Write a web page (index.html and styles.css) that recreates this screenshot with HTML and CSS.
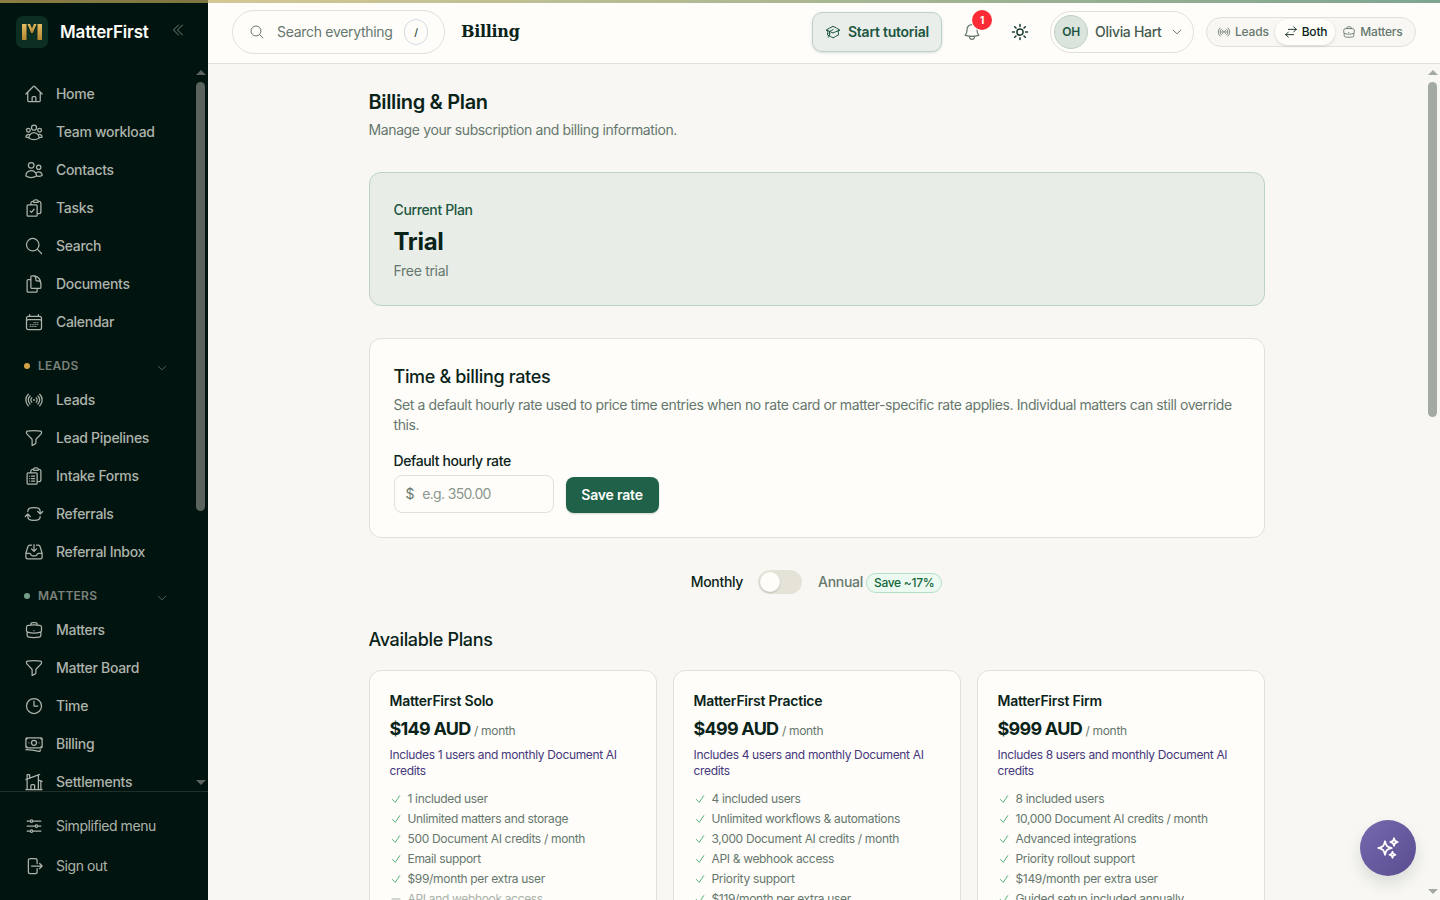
FILE: index.html
```html
<!DOCTYPE html>
<html lang="en">
<head>
    <meta charset="UTF-8">
    <meta name="viewport" content="width=device-width, initial-scale=1.0">
    <title>Billing - MatterFirst</title>
    <link rel="stylesheet" href="styles.css">
</head>
<body>
    <!-- Icon sprite -->
    <svg class="sprite">
        <symbol id="home" viewBox="0 0 24 24"><path d="m2.25 12 8.954-8.955c.44-.439 1.152-.439 1.591 0L21.75 12M4.5 9.75v10.125c0 .621.504 1.125 1.125 1.125H9.75v-4.875c0-.621.504-1.125 1.125-1.125h2.25c.621 0 1.125.504 1.125 1.125V21h4.125c.621 0 1.125-.504 1.125-1.125V9.75M8.25 21h8.25"/></symbol>
        <symbol id="team" viewBox="0 0 24 24"><path d="M18 18.72a9.094 9.094 0 0 0 3.741-.479 3 3 0 0 0-4.682-2.72m.94 3.198.001.031c0 .225-.012.447-.037.666A11.944 11.944 0 0 1 12 21c-2.17 0-4.207-.576-5.963-1.584A6.062 6.062 0 0 1 6 18.719m12 0a5.971 5.971 0 0 0-.941-3.197m0 0A5.995 5.995 0 0 0 12 12.75a5.995 5.995 0 0 0-5.058 2.772m0 0a3 3 0 0 0-4.681 2.72 8.986 8.986 0 0 0 3.74.477m.94-3.197a5.971 5.971 0 0 0-.94 3.197M15 6.75a3 3 0 1 1-6 0 3 3 0 0 1 6 0Zm6 3a2.25 2.25 0 1 1-4.5 0 2.25 2.25 0 0 1 4.5 0Zm-13.5 0a2.25 2.25 0 1 1-4.5 0 2.25 2.25 0 0 1 4.5 0Z"/></symbol>
        <symbol id="users" viewBox="0 0 24 24"><path d="M15 19.128a9.38 9.38 0 0 0 2.625.372 9.337 9.337 0 0 0 4.121-.952 4.125 4.125 0 0 0-7.533-2.493M15 19.128v-.003c0-1.113-.285-2.16-.786-3.07M15 19.128v.106A12.318 12.318 0 0 1 8.624 21c-2.331 0-4.512-.645-6.374-1.766l-.001-.109a6.375 6.375 0 0 1 11.964-3.07M12 6.375a3.375 3.375 0 1 1-6.75 0 3.375 3.375 0 0 1 6.75 0Zm8.25 2.25a2.625 2.625 0 1 1-5.25 0 2.625 2.625 0 0 1 5.25 0Z"/></symbol>
        <symbol id="tasks" viewBox="0 0 24 24"><path d="M11.35 3.836c-.065.21-.1.433-.1.664 0 .414.336.75.75.75h4.5a.75.75 0 0 0 .75-.75 2.25 2.25 0 0 0-.1-.664m-5.8 0A2.251 2.251 0 0 1 13.5 2.25H15c1.012 0 1.867.668 2.15 1.586m-5.8 0c-.376.023-.75.05-1.124.08C9.095 4.01 8.25 4.973 8.25 6.108V8.25m8.9-4.414c.376.023.75.05 1.124.08 1.131.094 1.976 1.057 1.976 2.192V16.5A2.25 2.25 0 0 1 18 18.75h-2.25m-7.5-10.5H4.875c-.621 0-1.125.504-1.125 1.125v11.25c0 .621.504 1.125 1.125 1.125h9.75c.621 0 1.125-.504 1.125-1.125V18.75m-7.5-10.5h6.375c.621 0 1.125.504 1.125 1.125v9.375m-8.25-3 1.5 1.5 3-3.75"/></symbol>
        <symbol id="search" viewBox="0 0 24 24"><path d="m21 21-5.197-5.197m0 0A7.5 7.5 0 1 0 5.196 5.196a7.5 7.5 0 0 0 10.607 10.607Z"/></symbol>
        <symbol id="documents" viewBox="0 0 24 24"><path d="M15.75 17.25v3.375c0 .621-.504 1.125-1.125 1.125h-9.75a1.125 1.125 0 0 1-1.125-1.125V7.875c0-.621.504-1.125 1.125-1.125H6.75a9.06 9.06 0 0 1 1.5.124m7.5 10.376h3.375c.621 0 1.125-.504 1.125-1.125V11.25c0-4.46-3.243-8.161-7.5-8.876a9.06 9.06 0 0 0-1.5-.124H9.375c-.621 0-1.125.504-1.125 1.125v3.5m7.5 10.375H9.375a1.125 1.125 0 0 1-1.125-1.125v-9.25m12 6.625v-1.875a3.375 3.375 0 0 0-3.375-3.375h-1.5a1.125 1.125 0 0 1-1.125-1.125v-1.5a3.375 3.375 0 0 0-3.375-3.375H9.75"/></symbol>
        <symbol id="calendar" viewBox="0 0 24 24"><path d="M6.75 3v2.25M17.25 3v2.25M3 18.75V7.5a2.25 2.25 0 0 1 2.25-2.25h13.5A2.25 2.25 0 0 1 21 7.5v11.25m-18 0A2.25 2.25 0 0 0 5.25 21h13.5A2.25 2.25 0 0 0 21 18.75m-18 0v-7.5A2.25 2.25 0 0 1 5.25 9h13.5A2.25 2.25 0 0 1 21 11.25v7.5M12 12.75h.01m2.24 0h.01m2.24 0h.01M7.5 15h.01m2.24 0h.01M12 15h.01m2.24 0h.01m2.24 0h.01M7.5 17.25h.01m2.24 0h.01m2.24 0h.01m2.24 0h.01"/></symbol>
        <symbol id="signal" viewBox="0 0 24 24"><path d="M9.348 14.652a3.75 3.75 0 0 1 0-5.304m5.304 0a3.75 3.75 0 0 1 0 5.304m-7.425 2.121a6.75 6.75 0 0 1 0-9.546m9.546 0a6.75 6.75 0 0 1 0 9.546M5.106 18.894c-3.808-3.807-3.808-9.98 0-13.788m13.788 0c3.808 3.807 3.808 9.98 0 13.788M12 12h.008v.008H12V12Zm.375 0a.375.375 0 1 1-.75 0 .375.375 0 0 1 .75 0Z"/></symbol>
        <symbol id="funnel" viewBox="0 0 24 24"><path d="M12 3c2.755 0 5.455.232 8.083.678.533.09.917.556.917 1.096v1.044a2.25 2.25 0 0 1-.659 1.591l-5.432 5.432a2.25 2.25 0 0 0-.659 1.591v2.927a2.25 2.25 0 0 1-1.244 2.013L9.75 21v-6.568a2.25 2.25 0 0 0-.659-1.591L3.659 7.409A2.25 2.25 0 0 1 3 5.818V4.774c0-.54.384-1.006.917-1.096A48.32 48.32 0 0 1 12 3Z"/></symbol>
        <symbol id="forms" viewBox="0 0 24 24"><path d="M9 12h3.75M9 15h3.75M9 18h3.75m3 .75H18a2.25 2.25 0 0 0 2.25-2.25V6.108c0-1.135-.845-2.098-1.976-2.192a48.424 48.424 0 0 0-1.123-.08m-5.801 0c-.065.21-.1.433-.1.664 0 .414.336.75.75.75h4.5a.75.75 0 0 0 .75-.75 2.25 2.25 0 0 0-.1-.664m-5.8 0A2.251 2.251 0 0 1 13.5 2.25H15c1.012 0 1.867.668 2.15 1.586m-5.8 0c-.376.023-.75.05-1.124.08C9.095 4.01 8.25 4.973 8.25 6.108V8.25m0 0H4.875c-.621 0-1.125.504-1.125 1.125v11.25c0 .621.504 1.125 1.125 1.125h9.75c.621 0 1.125-.504 1.125-1.125V9.375c0-.621-.504-1.125-1.125-1.125H8.25ZM6.75 12h.008v.008H6.75V12Zm0 3h.008v.008H6.75V15Zm0 3h.008v.008H6.75V18Z"/></symbol>
        <symbol id="referrals" viewBox="0 0 24 24"><path d="M19.5 12c0-1.232-.046-2.453-.138-3.662a4.006 4.006 0 0 0-3.7-3.7 48.678 48.678 0 0 0-7.324 0 4.006 4.006 0 0 0-3.7 3.7c-.017.22-.032.441-.046.662M19.5 12l3-3m-3 3-3-3m-12 3c0 1.232.046 2.453.138 3.662a4.006 4.006 0 0 0 3.7 3.7 48.656 48.656 0 0 0 7.324 0 4.006 4.006 0 0 0 3.7-3.7c.017-.22.032-.441.046-.662M4.5 12l3 3m-3-3-3 3"/></symbol>
        <symbol id="inbox" viewBox="0 0 24 24"><path d="M9 3.75H6.912a2.25 2.25 0 0 0-2.15 1.588L2.35 13.177a2.25 2.25 0 0 0-.1.661V18a2.25 2.25 0 0 0 2.25 2.25h15A2.25 2.25 0 0 0 21.75 18v-4.162c0-.224-.034-.447-.1-.661L19.24 5.338a2.25 2.25 0 0 0-2.15-1.588H15M2.25 13.5h3.86a2.25 2.25 0 0 1 2.012 1.244l.256.512a2.25 2.25 0 0 0 2.013 1.244h3.218a2.25 2.25 0 0 0 2.013-1.244l.256-.512a2.25 2.25 0 0 1 2.013-1.244h3.859M12 3v8.25m0 0-3-3m3 3 3-3"/></symbol>
        <symbol id="briefcase" viewBox="0 0 24 24"><path d="M20.25 14.15v4.25c0 1.094-.787 2.036-1.872 2.18-2.087.277-4.216.42-6.378.42s-4.291-.143-6.378-.42c-1.085-.144-1.872-1.086-1.872-2.18v-4.25m16.5 0a2.18 2.18 0 0 0 .75-1.661V8.706c0-1.081-.768-2.015-1.837-2.175a48.114 48.114 0 0 0-3.413-.387m4.5 8.006c-.194.165-.42.295-.673.38A23.978 23.978 0 0 1 12 15.75c-2.648 0-5.195-.429-7.577-1.22a2.016 2.016 0 0 1-.673-.38m0 0A2.18 2.18 0 0 1 3 12.489V8.706c0-1.081.768-2.015 1.837-2.175a48.111 48.111 0 0 1 3.413-.387m7.5 0V5.25A2.25 2.25 0 0 0 13.5 3h-3a2.25 2.25 0 0 0-2.25 2.25v.894m7.5 0a48.667 48.667 0 0 0-7.5 0M12 12.75h.008v.008H12v-.008Z"/></symbol>
        <symbol id="clock" viewBox="0 0 24 24"><path d="M12 6v6h4.5m4.5 0a9 9 0 1 1-18 0 9 9 0 0 1 18 0Z"/></symbol>
        <symbol id="banknotes" viewBox="0 0 24 24"><path d="M2.25 18.75a60.07 60.07 0 0 1 15.797 2.101c.727.198 1.453-.342 1.453-1.096V18.75M3.75 4.5v.75A.75.75 0 0 1 3 6h-.75m0 0v-.375c0-.621.504-1.125 1.125-1.125H20.25M2.25 6v9m18-10.5v.75c0 .414.336.75.75.75h.75m-1.5-1.5h.375c.621 0 1.125.504 1.125 1.125v9.75c0 .621-.504 1.125-1.125 1.125h-.375m1.5-1.5H21a.75.75 0 0 0-.75.75v.75m0 0H3.75m0 0h-.375a1.125 1.125 0 0 1-1.125-1.125V15m1.5 1.5v-.75A.75.75 0 0 0 3 15h-.75M15 10.5a3 3 0 1 1-6 0 3 3 0 0 1 6 0Zm3 0h.008v.008H18V10.5Zm-12 0h.008v.008H6V10.5Z"/></symbol>
        <symbol id="property" viewBox="0 0 24 24"><path d="M8.25 21v-4.875c0-.621.504-1.125 1.125-1.125h2.25c.621 0 1.125.504 1.125 1.125V21m0 0h4.5V3.545M12.75 21h7.5V10.75M2.25 21h1.5m18 0h-18M2.25 9l4.5-1.636M18.75 3l-1.5.545m0 6.205 3 1m1.5.5-1.5-.5M6.75 7.364V3h-3v18m3-13.636 10.5-3.819"/></symbol>
        <symbol id="sliders" viewBox="0 0 24 24"><path d="M10.5 6h9.75M10.5 6a1.5 1.5 0 1 1-3 0m3 0a1.5 1.5 0 1 0-3 0M3.75 6H7.5m3 12h9.75m-9.75 0a1.5 1.5 0 0 1-3 0m3 0a1.5 1.5 0 0 0-3 0m-3.75 0H7.5m9-6h3.75m-3.75 0a1.5 1.5 0 0 1-3 0m3 0a1.5 1.5 0 0 0-3 0m-9.75 0h9.75"/></symbol>
        <symbol id="logout" viewBox="0 0 24 24"><path d="M15.75 9V5.25A2.25 2.25 0 0 0 13.5 3h-6a2.25 2.25 0 0 0-2.25 2.25v13.5A2.25 2.25 0 0 0 7.5 21h6a2.25 2.25 0 0 0 2.25-2.25V15m3 0 3-3m0 0-3-3m3 3H9"/></symbol>
        <symbol id="cap" viewBox="0 0 24 24"><path d="M4.26 10.147a60.438 60.438 0 0 0-.491 6.347A48.62 48.62 0 0 1 12 20.904a48.62 48.62 0 0 1 8.232-4.41 60.46 60.46 0 0 0-.491-6.347m-15.482 0a50.636 50.636 0 0 0-2.658-.813A59.906 59.906 0 0 1 12 3.493a59.903 59.903 0 0 1 10.399 5.84c-.896.248-1.783.52-2.658.814m-15.482 0A50.717 50.717 0 0 1 12 13.489a50.702 50.702 0 0 1 7.74-3.342M6.75 15a.75.75 0 1 0 0-1.5.75.75 0 0 0 0 1.5Zm0 0v-3.675A55.378 55.378 0 0 1 12 8.443m-7.007 11.55A5.981 5.981 0 0 0 6.75 15.75v-1.5"/></symbol>
        <symbol id="bell" viewBox="0 0 24 24"><path d="M14.857 17.082a23.848 23.848 0 0 0 5.454-1.31A8.967 8.967 0 0 1 18 9.75V9A6 6 0 0 0 6 9v.75a8.967 8.967 0 0 1-2.312 6.022c1.733.64 3.56 1.085 5.455 1.31m5.714 0a24.255 24.255 0 0 1-5.714 0m5.714 0a3 3 0 1 1-5.714 0"/></symbol>
        <symbol id="sun" viewBox="0 0 24 24"><path d="M12 3v2.25m6.364.386-1.591 1.591M21 12h-2.25m-.386 6.364-1.591-1.591M12 18.75V21m-4.773-4.227-1.591 1.591M5.25 12H3m4.227-4.773L5.636 5.636M15.75 12a3.75 3.75 0 1 1-7.5 0 3.75 3.75 0 0 1 7.5 0Z"/></symbol>
        <symbol id="chevron" viewBox="0 0 24 24"><path d="m19.5 8.25-7.5 7.5-7.5-7.5"/></symbol>
        <symbol id="collapse" viewBox="0 0 24 24"><path d="m18.75 4.5-7.5 7.5 7.5 7.5m-6-15L5.25 12l7.5 7.5"/></symbol>
        <symbol id="swap" viewBox="0 0 24 24"><path d="M7.5 21 3 16.5m0 0L7.5 12M3 16.5h13.5m0-13.5L21 7.5m0 0L16.5 12M21 7.5H7.5"/></symbol>
        <symbol id="check" viewBox="0 0 24 24"><path d="m4.5 12.75 6 6 9-13.5"/></symbol>
        <symbol id="minus" viewBox="0 0 24 24"><path d="M4 12h16"/></symbol>
        <symbol id="sparkles" viewBox="0 0 24 24"><path d="M9.813 15.904 9 18.75l-.813-2.846a4.5 4.5 0 0 0-3.09-3.09L2.25 12l2.846-.813a4.5 4.5 0 0 0 3.09-3.09L9 5.25l.813 2.846a4.5 4.5 0 0 0 3.09 3.09L15.75 12l-2.846.813a4.5 4.5 0 0 0-3.09 3.09ZM18.259 8.715 18 9.75l-.259-1.035a3.375 3.375 0 0 0-2.455-2.456L14.25 6l1.036-.259a3.375 3.375 0 0 0 2.455-2.456L18 2.25l.259 1.035a3.375 3.375 0 0 0 2.456 2.456L21.75 6l-1.035.259a3.375 3.375 0 0 0-2.456 2.456ZM16.894 20.567 16.5 21.75l-.394-1.183a2.25 2.25 0 0 0-1.423-1.423L13.5 18.75l1.183-.394a2.25 2.25 0 0 0 1.423-1.423l.394-1.183.394 1.183a2.25 2.25 0 0 0 1.423 1.423l1.183.394-1.183.394a2.25 2.25 0 0 0-1.423 1.423Z"/></symbol>
    </svg>

    <div class="top-line"></div>

    <div class="app">
        <aside class="sidebar">
            <div class="brand">
                <svg class="logo" viewBox="0 0 32 32">
                    <defs>
                        <linearGradient id="gold" x1="0" y1="0" x2="0" y2="1">
                            <stop offset="0" stop-color="#e6bd62"/>
                            <stop offset="1" stop-color="#b3862f"/>
                        </linearGradient>
                    </defs>
                    <rect width="32" height="32" rx="7" fill="#0d2e23"/>
                    <g fill="url(#gold)">
                        <rect x="6" y="8" width="4.5" height="16"/>
                        <rect x="21.500" y="8" width="4.500" height="16"/>
                        <polygon points="11.500,8 14,8 16,12.500 18,8 20.500,8 16.800,17 15.200,17"/>
                    </g>
                </svg>
                <span class="brand-name">MatterFirst</span>
                <svg class="icon collapse"><use href="#collapse"/></svg>
            </div>

            <div class="nav-area">
                <nav class="nav">
                    <a class="nav-item"><svg class="icon"><use href="#home"/></svg>Home</a>
                    <a class="nav-item"><svg class="icon"><use href="#team"/></svg>Team workload</a>
                    <a class="nav-item"><svg class="icon"><use href="#users"/></svg>Contacts</a>
                    <a class="nav-item"><svg class="icon"><use href="#tasks"/></svg>Tasks</a>
                    <a class="nav-item"><svg class="icon"><use href="#search"/></svg>Search</a>
                    <a class="nav-item"><svg class="icon"><use href="#documents"/></svg>Documents</a>
                    <a class="nav-item"><svg class="icon"><use href="#calendar"/></svg>Calendar</a>

                    <div class="nav-heading"><span class="dot gold"></span>LEADS<svg class="icon"><use href="#chevron"/></svg></div>
                    <a class="nav-item"><svg class="icon"><use href="#signal"/></svg>Leads</a>
                    <a class="nav-item"><svg class="icon"><use href="#funnel"/></svg>Lead Pipelines</a>
                    <a class="nav-item"><svg class="icon"><use href="#forms"/></svg>Intake Forms</a>
                    <a class="nav-item"><svg class="icon"><use href="#referrals"/></svg>Referrals</a>
                    <a class="nav-item"><svg class="icon"><use href="#inbox"/></svg>Referral Inbox</a>

                    <div class="nav-heading"><span class="dot green"></span>MATTERS<svg class="icon"><use href="#chevron"/></svg></div>
                    <a class="nav-item"><svg class="icon"><use href="#briefcase"/></svg>Matters</a>
                    <a class="nav-item"><svg class="icon"><use href="#funnel"/></svg>Matter Board</a>
                    <a class="nav-item"><svg class="icon"><use href="#clock"/></svg>Time</a>
                    <a class="nav-item"><svg class="icon"><use href="#banknotes"/></svg>Billing</a>
                    <a class="nav-item"><svg class="icon"><use href="#property"/></svg>Settlements</a>
                </nav>
                <div class="scrollbar dark">
                    <span class="arrow up"></span>
                    <span class="thumb"></span>
                    <span class="arrow down"></span>
                </div>
            </div>

            <div class="sidebar-footer">
                <a class="nav-item"><svg class="icon"><use href="#sliders"/></svg>Simplified menu</a>
                <a class="nav-item"><svg class="icon"><use href="#logout"/></svg>Sign out</a>
            </div>
        </aside>

        <div class="page">
            <header class="header">
                <div class="search-box">
                    <svg class="icon"><use href="#search"/></svg>
                    <span>Search everything</span>
                    <kbd>/</kbd>
                </div>
                <span class="header-title">Billing</span>

                <button class="tutorial-btn"><svg class="icon"><use href="#cap"/></svg>Start tutorial</button>
                <div class="bell">
                    <svg class="icon"><use href="#bell"/></svg>
                    <span class="bell-count">1</span>
                </div>
                <svg class="icon sun"><use href="#sun"/></svg>
                <div class="user-menu">
                    <span class="avatar">OH</span>
                    <span class="user-name">Olivia Hart</span>
                    <svg class="icon"><use href="#chevron"/></svg>
                </div>
                <div class="view-switch">
                    <span class="view"><svg class="icon"><use href="#signal"/></svg>Leads</span>
                    <span class="view active"><svg class="icon"><use href="#swap"/></svg>Both</span>
                    <span class="view"><svg class="icon"><use href="#briefcase"/></svg>Matters</span>
                </div>
            </header>

            <div class="content-area">
                <main class="content">
                    <h1>Billing &amp; Plan</h1>
                    <p class="subtitle">Manage your subscription and billing information.</p>

                    <section class="card current-plan">
                        <p class="plan-label">Current Plan</p>
                        <p class="plan-title">Trial</p>
                        <p class="plan-note">Free trial</p>
                    </section>

                    <section class="card rates">
                        <h2>Time &amp; billing rates</h2>
                        <p class="rates-text">Set a default hourly rate used to price time entries when no rate card or matter-specific rate applies. Individual matters can still override this.</p>
                        <label class="rate-label" for="rate">Default hourly rate</label>
                        <div class="rate-row">
                            <div class="rate-input">
                                <span>$</span>
                                <input id="rate" type="text" placeholder="e.g. 350.00">
                            </div>
                            <button class="save-btn">Save rate</button>
                        </div>
                    </section>

                    <div class="period">
                        <span class="monthly">Monthly</span>
                        <span class="toggle"></span>
                        <span class="annual">Annual</span>
                        <span class="save-badge">Save ~17%</span>
                    </div>

                    <h2 class="plans-title">Available Plans</h2>
                    <div class="plans">
                        <div class="card plan">
                            <h3>MatterFirst Solo</h3>
                            <p class="price">$149 AUD <small>/ month</small></p>
                            <p class="includes">Includes 1 users and monthly Document AI credits</p>
                            <ul>
                                <li><svg class="icon"><use href="#check"/></svg>1 included user</li>
                                <li><svg class="icon"><use href="#check"/></svg>Unlimited matters and storage</li>
                                <li><svg class="icon"><use href="#check"/></svg>500 Document AI credits / month</li>
                                <li><svg class="icon"><use href="#check"/></svg>Email support</li>
                                <li><svg class="icon"><use href="#check"/></svg>$99/month per extra user</li>
                                <li class="off"><svg class="icon"><use href="#minus"/></svg>API and webhook access</li>
                            </ul>
                        </div>
                        <div class="card plan">
                            <h3>MatterFirst Practice</h3>
                            <p class="price">$499 AUD <small>/ month</small></p>
                            <p class="includes">Includes 4 users and monthly Document AI credits</p>
                            <ul>
                                <li><svg class="icon"><use href="#check"/></svg>4 included users</li>
                                <li><svg class="icon"><use href="#check"/></svg>Unlimited workflows &amp; automations</li>
                                <li><svg class="icon"><use href="#check"/></svg>3,000 Document AI credits / month</li>
                                <li><svg class="icon"><use href="#check"/></svg>API &amp; webhook access</li>
                                <li><svg class="icon"><use href="#check"/></svg>Priority support</li>
                                <li><svg class="icon"><use href="#check"/></svg>$119/month per extra user</li>
                            </ul>
                        </div>
                        <div class="card plan">
                            <h3>MatterFirst Firm</h3>
                            <p class="price">$999 AUD <small>/ month</small></p>
                            <p class="includes">Includes 8 users and monthly Document AI credits</p>
                            <ul>
                                <li><svg class="icon"><use href="#check"/></svg>8 included users</li>
                                <li><svg class="icon"><use href="#check"/></svg>10,000 Document AI credits / month</li>
                                <li><svg class="icon"><use href="#check"/></svg>Advanced integrations</li>
                                <li><svg class="icon"><use href="#check"/></svg>Priority rollout support</li>
                                <li><svg class="icon"><use href="#check"/></svg>$149/month per extra user</li>
                                <li><svg class="icon"><use href="#check"/></svg>Guided setup included annually</li>
                            </ul>
                        </div>
                    </div>
                </main>
                <div class="scrollbar">
                    <span class="arrow up"></span>
                    <span class="thumb"></span>
                    <span class="arrow down"></span>
                </div>
            </div>
        </div>
    </div>

    <button class="assistant-btn"><svg class="icon"><use href="#sparkles"/></svg></button>
</body>
</html>
```
FILE: styles.css
```css
* {
    box-sizing: border-box;
    margin: 0;
    padding: 0;
}

body {
    height: 100vh;
    overflow: hidden;
    font-family: Inter, "Liberation Sans", sans-serif;
    font-size: 14px;
    line-height: 20px;
    letter-spacing: -0.3px;
    color: #0a2319;
    background-color: #f8f7f3;
}

button, input {
    font: inherit;
    letter-spacing: inherit;
}

.sprite {
    display: none;
}

.icon {
    flex-shrink: 0;
    width: 20px;
    height: 20px;
    fill: none;
    stroke: currentColor;
    stroke-width: 1.5;
    stroke-linecap: round;
    stroke-linejoin: round;
}

/* Coloured line over the whole window */
.top-line {
    position: absolute;
    top: 0;
    left: 0;
    right: 0;
    height: 3px;
    background: linear-gradient(90deg, rgba(212, 180, 95, 0.65), rgba(58, 118, 89, 0.65));
    z-index: 5;
}

.app {
    display: flex;
    height: 100vh;
}

/* Sidebar */
.sidebar {
    display: flex;
    flex-direction: column;
    width: 208px;
    flex-shrink: 0;
    background-color: #02140f;
    color: #adb3ab;
}

.brand {
    display: flex;
    align-items: center;
    height: 64px;
    flex-shrink: 0;
    padding: 0 22px 0 16px;
}

.logo {
    width: 32px;
    height: 32px;
}

.brand-name {
    margin-left: 12px;
    font-size: 17px;
    font-weight: 600;
    letter-spacing: -0.15px;
    color: #fefdf9;
}

.collapse {
    width: 16px;
    height: 16px;
    margin-left: auto;
    margin-bottom: 4px;
    color: #78827b;
}

.nav-area {
    display: flex;
    flex: 1;
    min-height: 0;
}

.nav {
    flex: 1;
    padding: 11px 0 0 24px;
    overflow: hidden;
}

.nav-item {
    display: flex;
    align-items: center;
    gap: 12px;
    height: 38px;
    font-weight: 500;
    letter-spacing: -0.3px;
    white-space: nowrap;
}

.nav-heading {
    display: flex;
    align-items: center;
    height: 20px;
    margin: 15px 0 5px;
    padding-right: 25px;
    font-size: 12px;
    font-weight: 600;
    letter-spacing: 0.25px;
    color: #7b827b;
}

.nav-heading .icon {
    width: 12px;
    height: 12px;
    margin: 4px 0 0 auto;
    stroke-width: 2;
    color: #566059;
}

.dot {
    width: 6px;
    height: 6px;
    margin-right: 8px;
    border-radius: 50%;
}

.dot.gold {
    background-color: #d4a244;
}

.dot.green {
    background-color: #73a08b;
}

.sidebar-footer {
    height: 109px;
    flex-shrink: 0;
    padding: 14px 0 0 24px;
    border-top: 1px solid #1f2f29;
}

.sidebar-footer .nav-item {
    height: 40px;
    font-weight: 400;
    letter-spacing: -0.42px;
}

/* Scrollbars */
.scrollbar {
    display: flex;
    flex-direction: column;
    align-items: center;
    width: 15px;
    flex-shrink: 0;
    padding: 6px 0;
    color: #a3aaa3;
}

.scrollbar.dark {
    color: #5a635d;
}

.thumb {
    width: 9px;
    height: 335px;
    margin-top: 7px;
    border-radius: 5px;
    background-color: currentColor;
}

.dark .thumb {
    height: 429px;
}

.arrow {
    border: 5px solid transparent;
}

.arrow.up {
    border-top: 0;
    border-bottom-color: currentColor;
}

.arrow.down {
    margin-top: auto;
    border-bottom: 0;
    border-top-color: currentColor;
}

/* Header */
.page {
    display: flex;
    flex-direction: column;
    flex: 1;
    min-width: 0;
}

.header {
    display: flex;
    align-items: center;
    height: 64px;
    flex-shrink: 0;
    padding: 0 24px;
    background-color: #fefdf9;
    border-bottom: 1px solid #e2e1d7;
}

.search-box {
    display: flex;
    align-items: center;
    width: 213px;
    height: 44px;
    padding: 0 16px;
    border: 1px solid #e2e1d7;
    border-radius: 22px;
    color: #66776e;
}

.search-box .icon {
    width: 16px;
    height: 16px;
    margin-right: 12px;
}

kbd {
    width: 24px;
    height: 26px;
    margin-left: auto;
    border: 1px solid #d3d8e4;
    border-radius: 12px;
    font-family: inherit;
    font-size: 10px;
    font-weight: 600;
    line-height: 25px;
    text-align: center;
    color: #3d5147;
}

.header-title {
    margin-left: 16px;
    font-family: "DejaVu Serif", serif;
    font-size: 16px;
    font-weight: bold;
    letter-spacing: -0.3px;
}

.tutorial-btn {
    display: flex;
    align-items: center;
    gap: 7px;
    width: 130px;
    height: 40px;
    margin-left: auto;
    padding-left: 12px;
    border: 1px solid #bdd2c6;
    border-radius: 10px;
    background-color: #e9eeea;
    box-shadow: 0 1px 3px rgba(10, 35, 25, 0.15);
    color: #1c5640;
    font-weight: 600;
    letter-spacing: -0.25px;
    white-space: nowrap;
}

.tutorial-btn .icon {
    width: 16px;
    height: 16px;
}

.bell {
    position: relative;
    height: 20px;
    margin-left: 20px;
    color: #66776e;
}

/* Unread count over the bell */
.bell-count {
    position: absolute;
    top: -12px;
    left: 10px;
    width: 20px;
    height: 20px;
    border-radius: 50%;
    background-color: #fb2c36;
    box-shadow: 0 0 0 1px #fefdf9;
    color: #fff;
    font-size: 10px;
    font-weight: 700;
    text-align: center;
}

.sun {
    margin-left: 28px;
    stroke-width: 1.8;
    color: #12392b;
}

.user-menu {
    display: flex;
    align-items: center;
    width: 144px;
    height: 42px;
    margin-left: 20px;
    padding: 0 10px 0 3px;
    border: 1px solid #e2e1d7;
    border-radius: 21px;
    white-space: nowrap;
}

.avatar {
    width: 34px;
    height: 34px;
    border: 1px solid #bdd2c6;
    border-radius: 50%;
    background-color: #dae3dc;
    color: #1c5640;
    font-size: 12px;
    font-weight: 600;
    line-height: 32px;
    text-align: center;
}

.user-name {
    margin-left: 7px;
    font-weight: 500;
    color: #465a50;
}

.user-menu .icon {
    width: 12px;
    height: 12px;
    margin-left: auto;
    stroke-width: 2;
    color: #66776e;
}

.view-switch {
    display: flex;
    width: 210px;
    height: 30px;
    margin-left: 12px;
    padding: 1px;
    border: 1px solid #e2e1d7;
    border-radius: 15px;
    background-color: #f8f7f3;
    font-size: 12px;
    font-weight: 500;
    letter-spacing: -0.2px;
    color: #66776e;
}

.view {
    display: flex;
    align-items: center;
    gap: 4px;
    padding: 0 6px 0 9px;
}

.view .icon {
    width: 14px;
    height: 14px;
}

.view.active {
    padding: 0 8px 0 9px;
    border-radius: 13px;
    background-color: #fefdf9;
    box-shadow: 0 1px 3px rgba(10, 35, 25, 0.15);
    color: #0a2319;
}

.view.active + .view {
    padding-left: 7px;
}

/* Content */
.content-area {
    display: flex;
    flex: 1;
    min-height: 0;
}

.content {
    width: 896px;
    margin: 0 auto;
    padding-top: 24px;
    overflow: hidden;
}

h1 {
    font-size: 20px;
    font-weight: 600;
    line-height: 28px;
    letter-spacing: -0.35px;
}

h2 {
    font-size: 18px;
    font-weight: 500;
    line-height: 28px;
    letter-spacing: -0.34px;
}

.subtitle {
    margin-top: 4px;
    letter-spacing: -0.38px;
    color: #66776e;
}

.card {
    border: 1px solid #e2e1d7;
    border-radius: 12px;
    background-color: #fefdf9;
}

.current-plan {
    height: 134px;
    margin-top: 32px;
    padding: 27px 24px;
    border-color: #bdd2c6;
    background-color: #e8ede8;
}

.plan-label {
    font-weight: 500;
    letter-spacing: -0.36px;
    color: #1c5640;
}

.plan-title {
    margin: 6px 0 3px;
    font-size: 24px;
    font-weight: 700;
    line-height: 32px;
    letter-spacing: -0.3px;
}

.plan-note {
    color: #66776e;
}

.rates {
    height: 200px;
    margin-top: 32px;
    padding: 24px;
}

.rates-text {
    margin-top: 4px;
    letter-spacing: -0.41px;
    color: #66776e;
}

.rate-label {
    display: block;
    margin-top: 16px;
    font-weight: 500;
    letter-spacing: -0.38px;
}

.rate-row {
    display: flex;
    align-items: flex-end;
    gap: 12px;
    margin-top: 4px;
}

.rate-input {
    display: flex;
    align-items: center;
    width: 160px;
    height: 38px;
    padding: 0 11px;
    border: 1px solid #e2e1d7;
    border-radius: 8px;
    color: #66776e;
}

.rate-input input {
    width: 110px;
    margin-left: 8px;
    border: none;
    outline: none;
    background: transparent;
    letter-spacing: -0.65px;
}

.rate-input input::placeholder {
    color: #8b978f;
}

.save-btn {
    width: 93px;
    height: 36px;
    border: none;
    border-radius: 8px;
    background-color: #1f6249;
    box-shadow: 0 1px 2px rgba(10, 35, 25, 0.2);
    color: #fefdf9;
    font-weight: 600;
    letter-spacing: -0.2px;
}

.period {
    display: flex;
    align-items: center;
    justify-content: center;
    height: 24px;
    margin-top: 32px;
    font-weight: 500;
}

.toggle {
    width: 44px;
    height: 24px;
    margin: 0 16px 0 15px;
    padding: 2px;
    border-radius: 12px;
    background-color: #e5e3d8;
}

.toggle::before {
    content: "";
    display: block;
    width: 20px;
    height: 20px;
    border-radius: 50%;
    background-color: #fefdf9;
    box-shadow: 0 1px 2px rgba(10, 35, 25, 0.2);
}

.annual {
    color: #66776e;
}

.save-badge {
    height: 20px;
    margin: 2px 0 0 3px;
    padding: 0 7px;
    border: 1px solid #b4dfc5;
    border-radius: 10px;
    background-color: #ecfaf1;
    color: #13663a;
    font-size: 12px;
    line-height: 18px;
}

.plans-title {
    margin: 32px 0 16px;
}

.plans {
    display: grid;
    grid-template-columns: repeat(3, 1fr);
    gap: 16px;
}

.plan {
    padding: 20px;
}

.plan h3 {
    font-size: 14px;
    font-weight: 600;
    line-height: 20px;
    letter-spacing: -0.24px;
}

.price {
    margin-top: 4px;
    font-size: 18px;
    font-weight: 700;
    line-height: 28px;
    letter-spacing: -0.75px;
}

.price small {
    font-size: 12px;
    font-weight: 400;
    letter-spacing: -0.3px;
    color: #66776e;
}

.includes {
    margin-top: 2px;
    font-size: 12px;
    line-height: 16px;
    letter-spacing: -0.34px;
    color: #46387c;
}

.plan ul {
    margin-top: 10px;
    list-style: none;
}

.plan li {
    display: flex;
    align-items: center;
    gap: 6px;
    height: 20px;
    font-size: 12px;
    letter-spacing: -0.33px;
    color: #66776e;
    white-space: nowrap;
}

.plan li .icon {
    width: 12px;
    height: 12px;
    stroke-width: 2;
    color: #55b57c;
}

.plan li.off,
.plan li.off .icon {
    color: #a9b1aa;
}

/* Floating assistant button */
.assistant-btn {
    position: absolute;
    right: 24px;
    bottom: 24px;
    display: flex;
    align-items: center;
    justify-content: center;
    width: 56px;
    height: 56px;
    border: none;
    border-radius: 50%;
    background: linear-gradient(135deg, #7769ae, #5b4c90);
    box-shadow: 0 8px 16px rgba(10, 35, 25, 0.12);
    color: #fff;
}

.assistant-btn .icon {
    width: 24px;
    height: 24px;
    stroke-width: 1.8;
}
```
